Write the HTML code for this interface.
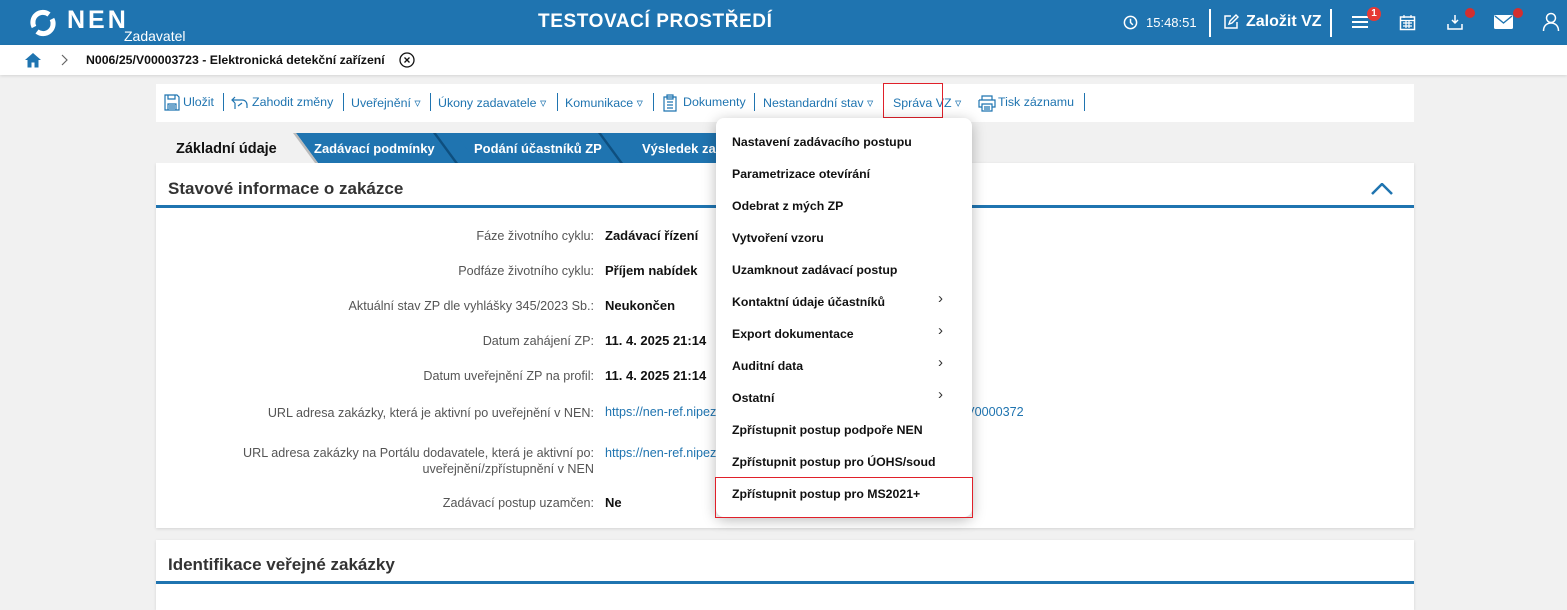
<!DOCTYPE html>
<html><head><meta charset="utf-8"><style>
*{margin:0;padding:0;box-sizing:border-box}
body{width:1567px;height:602px;overflow:hidden;background:#f1f1f1;font-family:"Liberation Sans",Arial,sans-serif;position:relative}
.a{position:absolute;white-space:nowrap}
.hdr{left:0;top:0;width:1567px;height:45px;background:#1f74b0;color:#fff}
.bc{left:0;top:45px;width:1567px;height:30px;background:#fff;box-shadow:0 1px 3px rgba(0,0,0,.12)}
.tb{left:156px;top:84px;width:1258px;height:38px;background:#fff;font-size:12.4px;color:#1f74b0}
.tb span{position:absolute;top:11px}
.sep{position:absolute;top:9px;width:1px;height:18px;background:#1f74b0}
.panel{background:#fff;box-shadow:0 1px 3px rgba(0,0,0,.12)}
.lab{font-size:12.6px;color:#555;text-align:right;right:973px;line-height:16px}
.val{font-size:13px;color:#111;font-weight:bold;left:605px}
.menu{left:716px;top:118px;width:256px;height:399px;background:#fff;border-radius:8px;box-shadow:0 3px 14px rgba(0,0,0,.28);z-index:20}
.mi{position:absolute;left:16px;font-size:12.3px;color:#111;font-weight:bold}
.ch{position:absolute;left:222px;font-size:15px;color:#333}
.tab{position:absolute;top:133px;height:30px;color:#fff;font-weight:bold;font-size:13px;line-height:32px;background:#1f74b0;clip-path:polygon(0 0,calc(100% - 22px) 0,100% 100%,0 100%)}
.tabe{position:absolute;top:133px;height:30px;background:#0e4f7f;clip-path:polygon(0 0,3px 0,25px 30px,22px 30px)}
</style></head><body>
<div class="a hdr">
 <svg class="a" style="left:27px;top:7px" width="32" height="32" viewBox="0 0 32 32"><path d="M7 20A10 10 0 0 1 22 7.5" fill="none" stroke="#fff" stroke-width="5"/><path d="M25 12A10 10 0 0 1 10 24.5" fill="none" stroke="#fff" stroke-width="5"/></svg>
 <div class="a" style="left:67px;top:6px;font-size:25px;font-weight:bold;letter-spacing:3px">NEN</div>
 <div class="a" style="left:124px;top:28px;font-size:14px">Zadavatel</div>
 <div class="a" style="left:538px;top:11px;font-size:19px;font-weight:bold;letter-spacing:.6px">TESTOVACÍ PROSTŘEDÍ</div>
 <svg class="a" style="left:1123px;top:15px" width="15" height="15" viewBox="0 0 16 16"><circle cx="8" cy="8" r="6.5" fill="none" stroke="#fff" stroke-width="1.6"/><path d="M8 4v4l2.5 2.5" stroke="#fff" stroke-width="1.6" fill="none"/></svg>
 <div class="a" style="left:1146px;top:15px;font-size:13px">15:48:51</div>
 <div class="a" style="left:1209px;top:9px;width:2px;height:28px;background:#fff"></div>
 <svg class="a" style="left:1222px;top:13px" width="18" height="18" viewBox="0 0 18 18"><path d="M9 3H3v12h12V9" fill="none" stroke="#fff" stroke-width="1.5"/><path d="M7 11l1-3 6-6 2 2-6 6z" fill="none" stroke="#fff" stroke-width="1.4"/></svg>
 <div class="a" style="left:1246px;top:13px;font-size:16px;font-weight:bold">Založit VZ</div>
 <div class="a" style="left:1330px;top:9px;width:2px;height:28px;background:#fff"></div>
 <div class="a" style="left:1352px;top:16px;width:16px;height:2px;background:#fff;box-shadow:0 5px 0 #fff,0 10px 0 #fff"></div>
 <div class="a" style="left:1367px;top:7px;width:14px;height:14px;border-radius:7px;background:#e53935;font-size:10px;font-weight:bold;text-align:center;line-height:14px">1</div>
 <svg class="a" style="left:1399px;top:14px" width="17" height="17" viewBox="0 0 17 17"><rect x="1.5" y="3" width="14" height="12.5" fill="none" stroke="#fff" stroke-width="1.5"/><path d="M1.5 6.5h14M5 1v3M12 1v3M4 9h9M4 12h9M7 7v7M10 7v7" stroke="#fff" stroke-width="1.2"/></svg>
 <svg class="a" style="left:1446px;top:13px" width="18" height="18" viewBox="0 0 18 18"><path d="M9 2v8M6 7l3 3 3-3M2 11v5h14v-5" fill="none" stroke="#fff" stroke-width="1.5"/></svg>
 <div class="a" style="left:1465px;top:8px;width:10px;height:10px;border-radius:5px;background:#d32f2f"></div>
 <svg class="a" style="left:1494px;top:15px" width="19" height="14" viewBox="0 0 19 14"><rect width="19" height="14" rx="1.5" fill="#fff"/><path d="M1 1l8.5 7L18 1" fill="none" stroke="#1f74b0" stroke-width="1.4"/></svg>
 <div class="a" style="left:1513px;top:8px;width:10px;height:10px;border-radius:5px;background:#d32f2f"></div>
 <svg class="a" style="left:1542px;top:12px" width="18" height="20" viewBox="0 0 18 20"><circle cx="9" cy="6" r="4.5" fill="none" stroke="#fff" stroke-width="1.5"/><path d="M1.5 19c0-5 3-8 7.5-8s7.5 3 7.5 8" fill="none" stroke="#fff" stroke-width="1.5"/></svg>
</div>
<div class="a bc">
 <svg class="a" style="left:24px;top:7px" width="18" height="16" viewBox="0 0 18 16"><path d="M9 1L1 8h2.5v7.5h4v-5h3v5h4V8H17z" fill="#1f74b0"/></svg>
 <svg class="a" style="left:61px;top:9px" width="8" height="12" viewBox="0 0 8 12"><path d="M1 1l5 5-5 5" fill="none" stroke="#666" stroke-width="1.2"/></svg>
 <div class="a" style="left:86px;top:8px;font-size:12.3px;font-weight:bold;color:#111">N006/25/V00003723 - Elektronická detekční zařízení</div>
 <svg class="a" style="left:399px;top:7px" width="16" height="16" viewBox="0 0 16 16"><circle cx="8" cy="8" r="7" fill="none" stroke="#111" stroke-width="1.3"/><path d="M5.5 5.5l5 5M10.5 5.5l-5 5" stroke="#111" stroke-width="1.3"/></svg>
</div>
<div class="a tb">
 <svg class="a" style="left:8px;top:10px" width="16" height="17" viewBox="0 0 16 17"><path d="M1 1h12l2 2v13H1z M4 1v4h7V1 M4 16v-6h8v6 M5 12h6 M5 14h6" fill="none" stroke="#1f74b0" stroke-width="1.2"/></svg>
 <span style="left:27px">Uložit</span><i class="sep" style="left:67px"></i>
 <svg class="a" style="left:75px;top:12px" width="18" height="14" viewBox="0 0 18 14"><path d="M1 4h10c3 0 5 2 5 5v3 M4 1L1 4l3 3 M4 7v6 M7 10l4-3" fill="none" stroke="#1f74b0" stroke-width="1.2"/></svg>
 <span style="left:96px">Zahodit změny</span><i class="sep" style="left:187px"></i>
 <span style="left:195px">Uveřejnění ▿</span><i class="sep" style="left:274px"></i>
 <span style="left:282px">Úkony zadavatele ▿</span><i class="sep" style="left:401px"></i>
 <span style="left:409px">Komunikace ▿</span><i class="sep" style="left:497px"></i>
 <svg class="a" style="left:507px;top:10px" width="14" height="18" viewBox="0 0 14 18"><path d="M1 3h12v14H1z M4 1h6v4H4z M4 8h6M4 11h6M4 14h6" fill="none" stroke="#1f74b0" stroke-width="1.2"/></svg>
 <span style="left:527px">Dokumenty</span><i class="sep" style="left:598px"></i>
 <span style="left:607px">Nestandardní stav ▿</span><i class="sep" style="left:727px"></i>
 <span style="left:737px">Správa VZ ▿</span>
 <svg class="a" style="left:822px;top:11px" width="18" height="17" viewBox="0 0 18 17"><path d="M4 5V1h10v4 M1 5h16v7h-3 M4 12H1V5 M4 9h10v7H4z M6 12h6M6 14h6" fill="none" stroke="#1f74b0" stroke-width="1.2"/></svg>
 <span style="left:842px">Tisk záznamu</span><i class="sep" style="left:928px"></i>
</div>
<div class="a" style="left:883px;top:83px;width:60px;height:35px;border:1px solid #e0202a"></div>
<div class="tab" style="left:620px;width:200px;padding-left:22px;z-index:1">Výsledek zadávacího</div>
<div class="tab" style="left:455px;width:188px;padding-left:19px;z-index:2">Podání účastníků ZP</div>
<div class="tabe" style="left:598px;width:26px;z-index:3"></div>
<div class="tab" style="left:295px;width:182px;padding-left:19px;z-index:4">Zadávací podmínky</div>
<div class="tabe" style="left:433px;width:26px;z-index:5"></div>
<div class="a" style="left:156px;top:133px;width:162px;height:30px;background:#f1f1f1;clip-path:polygon(0 0,140px 0,162px 30px,0 30px);z-index:6"></div>
<div class="tabe" style="left:293px;width:26px;background:#bbb;z-index:7"></div>
<div class="a" style="left:176px;top:141px;font-size:14.5px;font-weight:bold;color:#111;z-index:8">Základní údaje</div>
<div class="a panel" style="left:156px;top:163px;width:1258px;height:365px">
 <div class="a" style="left:12px;top:16px;font-size:17px;font-weight:bold;color:#333">Stavové informace o zakázce</div>
 <div class="a" style="left:0;top:42px;width:1258px;height:3px;background:#1f74b0"></div>
 <svg class="a" style="left:1215px;top:20px" width="22" height="12" viewBox="0 0 22 12"><path d="M1 11L11 1l10 10" fill="none" stroke="#1f74b0" stroke-width="2.5"/></svg>
</div>
<div class="a lab" style="top:228px">Fáze životního cyklu:</div><div class="a val" style="top:228px">Zadávací řízení</div>
<div class="a lab" style="top:263px">Podfáze životního cyklu:</div><div class="a val" style="top:263px">Příjem nabídek</div>
<div class="a lab" style="top:298px">Aktuální stav ZP dle vyhlášky 345/2023 Sb.:</div><div class="a val" style="top:298px">Neukončen</div>
<div class="a lab" style="top:333px">Datum zahájení ZP:</div><div class="a val" style="top:333px">11. 4. 2025 21:14</div>
<div class="a lab" style="top:368px">Datum uveřejnění ZP na profil:</div><div class="a val" style="top:368px">11. 4. 2025 21:14</div>
<div class="a lab" style="top:405px">URL adresa zakázky, která je aktivní po uveřejnění v NEN:</div><div class="a" style="left:605px;top:405px;font-size:12.6px;color:#1f74b0">https://nen-ref.nipez.cz/verejne-zakazky/detail-zakazky/N006-25-V0000372</div>
<div class="a lab" style="top:445px">URL adresa zakázky na Portálu dodavatele, která je aktivní po:<br>uveřejnění/zpřístupnění v NEN</div><div class="a" style="left:605px;top:446px;font-size:12.6px;color:#1f74b0">https://nen-ref.nipez.cz</div>
<div class="a lab" style="top:495px">Zadávací postup uzamčen:</div><div class="a val" style="top:495px">Ne</div>
<div class="a panel" style="left:156px;top:540px;width:1258px;height:70px">
 <div class="a" style="left:12px;top:15px;font-size:17px;font-weight:bold;color:#333">Identifikace veřejné zakázky</div>
 <div class="a" style="left:0;top:41px;width:1258px;height:3px;background:#1f74b0"></div>
</div>
<div class="a menu">
 <div class="mi" style="top:17px">Nastavení zadávacího postupu</div>
 <div class="mi" style="top:49px">Parametrizace otevírání</div>
 <div class="mi" style="top:81px">Odebrat z mých ZP</div>
 <div class="mi" style="top:113px">Vytvoření vzoru</div>
 <div class="mi" style="top:145px">Uzamknout zadávací postup</div>
 <div class="mi" style="top:177px">Kontaktní údaje účastníků</div><div class="ch" style="top:172px">›</div>
 <div class="mi" style="top:209px">Export dokumentace</div><div class="ch" style="top:204px">›</div>
 <div class="mi" style="top:241px">Auditní data</div><div class="ch" style="top:236px">›</div>
 <div class="mi" style="top:273px">Ostatní</div><div class="ch" style="top:268px">›</div>
 <div class="mi" style="top:305px">Zpřístupnit postup podpoře NEN</div>
 <div class="mi" style="top:337px">Zpřístupnit postup pro ÚOHS/soud</div>
 <div class="mi" style="top:369px">Zpřístupnit postup pro MS2021+</div>
</div>
<div class="a" style="left:715px;top:477px;width:258px;height:41px;border:1px solid #e0202a;z-index:21"></div>
</body></html>
